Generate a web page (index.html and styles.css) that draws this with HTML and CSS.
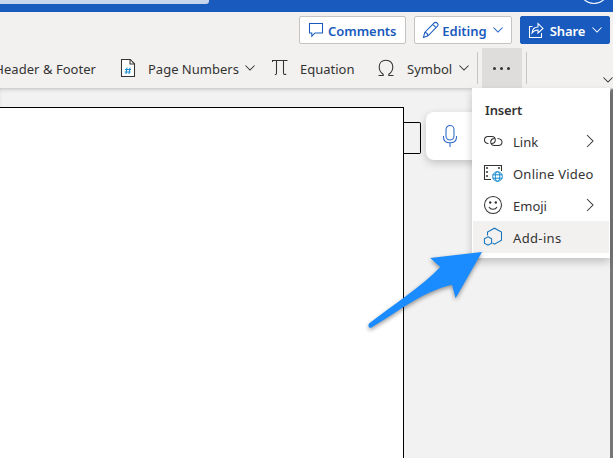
FILE: index.html
```html
<!DOCTYPE html>
<html lang="en">
<head>
<meta charset="utf-8">
<title>Document</title>
<link rel="stylesheet" href="styles.css">
</head>
<body>
<div class="app">
  <header class="titlebar">
    <div class="search"></div>
    <svg class="avatar" viewBox="0 0 32 12"><circle cx="16" cy="-11" r="14.5" fill="none" stroke="#fff"/></svg>
  </header>
  <div class="actions">
    <button class="btn comments">
      <svg width="16" height="16" viewBox="0 0 16 16"><path d="M1.500 1.500h13v9.500H7l-3.200 3.200V11H1.500z"/></svg>
      <span>Comments</span>
    </button>
    <button class="btn editing">
      <svg width="18" height="18" viewBox="0 0 18 18"><path d="M1.500 16.500l1.200-5L12.200 2c2-1.800 5 1.200 3.300 3.200L6 14.800zM10.800 3.400l3.500 3.500M2.700 11.500c1.800.1 3.100 1.400 3.300 3.300"/></svg>
      <span>Editing</span>
      <svg class="chev" width="10" height="6" viewBox="0 0 10 6"><path d="M.5.5L5 5 9.500.5"/></svg>
    </button>
    <button class="btn share">
      <svg width="16" height="16" viewBox="0 0 16 16"><path d="M4.500 4.500H1.500v11h12V11M4 11c.4-4 2.300-6 6-6V1.500l5 5-5 4.500V8C7.500 8 5.500 9 4 11z"/></svg>
      <span>Share</span>
      <svg class="chev" width="10" height="6" viewBox="0 0 10 6"><path d="M.5.5L5 5 9.500.5"/></svg>
    </button>
  </div>
  <nav class="ribbon">
    <span class="header-footer">Header &amp; Footer</span>
    <svg class="icon" width="16" height="20" viewBox="0 0 16 20"><path fill="#fff" d="M1.500 1.500h8.700l4.300 4.300v12.700h-13z"/><path d="M10 1.500V6h4.500"/><path class="cyan" d="M7 9.500l-1 6.500M10 9.500l-1 6.500M5 11.500h6M4.600 14h6"/></svg>
    <span class="page-numbers">Page Numbers</span>
    <svg class="chev" width="10" height="6" viewBox="0 0 10 6"><path d="M.5.5L5 5 9.500.5"/></svg>
    <svg class="icon" width="16" height="18" viewBox="0 0 16 18"><path d="M.5 3V1.500h15M4.500 1.500V14.500c0 1-.5 1.300-1.700 1.300M11.500 1.500V14c0 1.500 1.500 2 2.700.8"/></svg>
    <span class="equation">Equation</span>
    <svg class="icon" width="16" height="18" viewBox="0 0 16 18"><path d="M.5 16.500h4.700v-1.300C2.500 13.500 1.200 11 1.200 8c0-4 2.500-6.800 6.800-6.800S14.800 4 14.800 8c0 3-1.300 5.500-4 7.200v1.300h4.700"/></svg>
    <span class="symbol">Symbol</span>
    <svg class="chev" width="10" height="6" viewBox="0 0 10 6"><path d="M.5.5L5 5 9.500.5"/></svg>
    <i class="rule"></i>
    <button class="more"><i></i><i></i><i></i></button>
    <i class="rule"></i>
    <svg class="chev collapse" width="10" height="6" viewBox="0 0 10 6"><path d="M.5.5L5 5 9.500.5"/></svg>
  </nav>
  <main class="canvas">
    <div class="page"></div>
    <div class="marker"></div>
    <div class="dictate">
      <svg width="16" height="24" viewBox="0 0 16 24"><rect x="4" y="1.500" width="8" height="14.500" rx="4"/><path d="M1.500 12v1.200c0 3.500 2.600 5.500 6.500 5.500s6.500-2 6.500-5.500V12M8 18.700V23"/></svg>
    </div>
    <div class="scrollbar"></div>
  </main>
  <div class="menu">
    <h2>Insert</h2>
    <div class="item">
      <svg class="icon" width="20" height="18" viewBox="0 0 20 18"><path d="M5.500 11.500C2.500 11.300 1.500 9.700 1.500 8c0-2 1.400-3.500 3.500-3.500h3.800C11 4.500 12.300 6 12.300 8S10.700 11.500 8.500 11.500M14.500 6.500c3 .2 4.500 1.700 4.500 3.500 0 2-1.600 3.500-3.700 3.500h-3.800C9.300 13.500 7.700 12 7.700 10s1.600-3.500 3.800-3.500"/></svg>
      <span class="link">Link</span>
      <svg class="arrow" width="8" height="14" viewBox="0 0 8 14"><path d="M1 1l6 6-6 6"/></svg>
    </div>
    <div class="item">
      <svg class="icon" width="20" height="18" viewBox="0 0 20 18"><path d="M8 15.500H1.500v-14h17V7"/><path stroke-dasharray="2 2" stroke-width="1.500" d="M4 3v12M16 3v3"/><circle cx="14.500" cy="12.500" r="6" fill="#fff" stroke="none"/><g class="cyan"><circle cx="14.500" cy="12.500" r="4.800"/><ellipse cx="14.500" cy="12.500" rx="2.200" ry="4.800"/><path d="M9.700 10.800h9.600M9.700 14.200h9.600"/></g></svg>
      <span class="video">Online Video</span>
    </div>
    <div class="item">
      <svg class="icon" width="20" height="20" viewBox="0 0 20 20"><circle cx="10" cy="10" r="8.500"/><path d="M6 12c1.500 3 6.500 3 8 0"/><circle class="dot" cx="7.200" cy="7.500" r="1.200"/><circle class="dot" cx="12.800" cy="7.500" r="1.200"/></svg>
      <span class="emoji">Emoji</span>
      <svg class="arrow" width="8" height="14" viewBox="0 0 8 14"><path d="M1 1l6 6-6 6"/></svg>
    </div>
    <div class="item active">
      <svg class="icon blue" width="20" height="20" viewBox="0 0 20 20"><path d="M4.500 8.500V5L11.500 1.200 18.500 5v8.200L11.500 17.200 9.500 16"/><path d="M5 9.800l3.600 2v4.300l-3.600 2-3.600-2v-4.300z"/></svg>
      <span class="addins">Add-ins</span>
    </div>
  </div>
  <svg class="pointer" width="140" height="100" viewBox="0 0 140 100"><path d="M127 12L75.200 17.900 85.300 27C66 47 38 65 14.300 83.300 12.200 85.500 14.200 89 17 87.200 40 74 66 52 97 44.800L100.600 58.200z"/></svg>
</div>
</body>
</html>
```
FILE: styles.css
```css
* { box-sizing: border-box; }
body { margin: 0; overflow: hidden; }
.app {
  position: relative;
  width: 613px;
  height: 458px;
  overflow: hidden;
  background: #f2f1ef;
  color: #333;
  font: 13px/20px "Noto Sans", "Open Sans", sans-serif;
  white-space: nowrap;
}
svg { display: block; flex: none; fill: none; stroke: #333; stroke-width: 1.05; }
button { margin: 0; padding: 0; border: 0; font: inherit; color: inherit; }
.cyan { stroke: #1688cf; stroke-width: 1; }
.titlebar {
  display: flex;
  justify-content: space-between;
  height: 12px;
  background: #185abd;
}
.search { width: 209px; height: 4px; border-radius: 0 0 3px 0; background: #c6d5eb; }
.avatar { width: 32px; height: 12px; margin-right: 3px; }
.actions {
  display: flex;
  justify-content: flex-end;
  height: 36px;
  padding: 4px 3px 0 0;
}
.btn {
  display: flex;
  align-items: center;
  height: 28px;
  border: 1px solid #c6c4c2;
  border-radius: 2px;
  background: #fff;
  color: #185abd;
  font-weight: 600;
}
.btn svg { stroke: #185abd; }
.btn span { position: relative; top: 1px; }
.comments { width: 107px; margin-right: 8px; padding-left: 8px; }
.comments span { margin-left: 4px; letter-spacing: -0.05px; }
.editing { width: 98px; margin-right: 8px; padding-left: 7px; }
.editing span { width: 45px; margin: 0 6px 0 2px; }
.share { width: 90px; border-color: #185abd; background: #185abd; color: #fff; padding-left: 7px; }
.share svg { stroke: #fff; }
.share span { width: 37px; margin: 0 6px 0 5px; letter-spacing: -0.1px; }
.ribbon {
  display: flex;
  align-items: center;
  height: 40px;
}
.ribbon > * { flex: none; }
.ribbon > span { position: relative; top: 1px; }
.header-footer { display: flex; justify-content: flex-end; width: 96px; margin-right: 24px; letter-spacing: 0.04px; }
.page-numbers { width: 92px; margin: 0 5px 0 12px; }
.page-numbers + .chev { margin-right: 17px; }
.equation { width: 56px; margin: 0 22px 0 12px; }
.symbol { width: 47px; margin: 0 5px 0 13px; }
.symbol + .chev { margin-right: 8px; }
.rule { width: 1px; height: 32px; background: #c6c4c2; }
.more {
  display: flex;
  align-items: center;
  justify-content: center;
  gap: 4px;
  width: 40px;
  height: 40px;
  margin: 0 4px;
  padding-right: 2px;
  background: #dedddb;
}
.more i { width: 3px; height: 3px; border-radius: 50%; background: #333; }
.collapse { margin: 24px 0 0 76px; }
.canvas {
  display: flex;
  height: 370px;
  background: #f2f2f2;
  box-shadow: inset 0 3px 4px -2px #bbb;
}
.page {
  width: 404px;
  height: 360px;
  margin-top: 19px;
  border: solid #000;
  border-width: 1px 1px 0 0;
  background: #fff;
}
.marker {
  width: 17px;
  height: 32px;
  margin-top: 34px;
  border: 1px solid #000;
  border-left: 0;
  border-radius: 0 2px 2px 0;
}
.dictate {
  display: flex;
  width: 60px;
  height: 48px;
  margin: 24px 0 0 5px;
  padding: 12px 0 0 16px;
  border-radius: 8px;
  background: #fff;
  box-shadow: 0 3px 8px #0003;
}
.dictate svg { stroke: #2b68c4; }
.scrollbar { width: 3px; margin: 1px 0 0 auto; border-radius: 3px 0 0 0; background: #777; }
.menu {
  position: absolute;
  left: 472px;
  top: 88px;
  width: 138px;
  height: 170px;
  padding: 6px 1px 0;
  background: #fff;
  box-shadow: 0 4px 8px #0003;
}
.menu h2 { margin: 0; padding: 6px 0 0 12px; height: 31px; font: 600 13px/20px "Noto Sans", sans-serif; letter-spacing: -0.15px; }
.item {
  display: flex;
  align-items: center;
  height: 32px;
  padding: 0 15px 0 10px;
}
.item .icon { margin-right: 10px; }
.item span { position: relative; top: 1px; }
.video, .addins { letter-spacing: 0.22px; }
.addins { letter-spacing: 0.35px; }
.item .arrow { margin: -1px 0 0 auto; }
.active { background: #f2f1ef; }
.dot { fill: #333; stroke: none; }
.blue { stroke: #1473bf; }
.pointer {
  position: absolute;
  left: 355px;
  top: 240px;
  stroke: none;
  fill: #1b8cff;
  filter: drop-shadow(0 2px 2px #0006);
}
```
